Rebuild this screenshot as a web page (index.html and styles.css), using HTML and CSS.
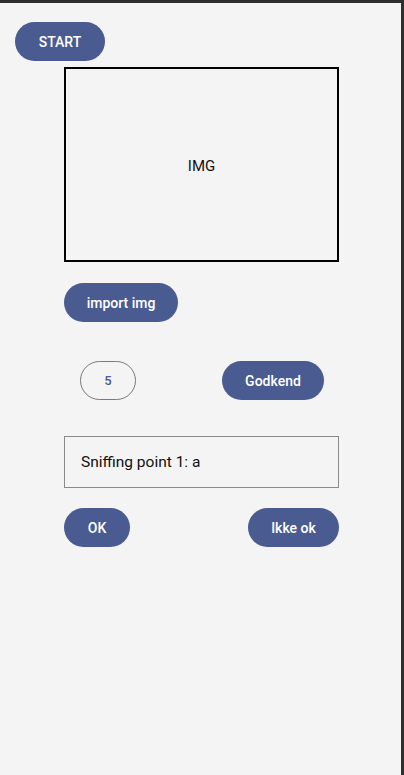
FILE: index.html
```html
<!DOCTYPE html>
<html>
<head>
<meta charset="utf-8">
<link rel="stylesheet" href="styles.css">
</head>
<body>
<div class="screen">
  <div class="top">
    <button class="btn btn-start">START</button>
  </div>
  <div class="main">
    <div class="imgbox">IMG</div>
    <button class="btn btn-import">import img</button>
    <div class="row row-count">
      <div class="pill">5</div>
      <button class="btn btn-godkend">Godkend</button>
    </div>
    <div class="textbox">Sniffing point 1: a</div>
    <div class="row row-ok">
      <button class="btn btn-ok">OK</button>
      <button class="btn btn-ikke">Ikke ok</button>
    </div>
  </div>
</div>
</body>
</html>
```
FILE: styles.css
```css
* { box-sizing: border-box; }
html, body { margin: 0; padding: 0; }
body {
  font-family: Roboto, "Liberation Sans", sans-serif;
  background: #f4f4f4;
}
.screen {
  width: 404px;
  height: 775px;
  background: #f4f4f4;
  border-top: 3px solid #2e2e2e;
  border-right: 3px solid #2e2e2e;
}
.top {
  padding: 19px 0 0 15px;
}
.btn {
  display: flex;
  align-items: center;
  justify-content: center;
  height: 39px;
  border: none;
  border-radius: 20px;
  background: #4a5b91;
  color: #ffffff;
  font-family: "Roboto Medium", Roboto, "Liberation Sans", sans-serif;
  font-weight: 500;
  font-size: 14px;
  padding: 0;
  margin: 0;
}
.btn-start { width: 90px; }
.main {
  margin-left: 64px;
  width: 275px;
  display: flex;
  flex-direction: column;
}
.imgbox {
  margin-top: 6px;
  width: 275px;
  height: 195px;
  border: 2px solid #000;
  display: flex;
  align-items: center;
  justify-content: center;
  font-size: 15px;
  color: #111;
  padding-top: 2px;
}
.btn-import { margin-top: 21px; width: 114px; }
.row { display: flex; align-items: center; }
.row-count { margin-top: 39px; padding-left: 16px; }
.pill {
  width: 56px;
  height: 39px;
  border: 1px solid #7a7a7a;
  border-radius: 20px;
  display: flex;
  align-items: center;
  justify-content: center;
  color: #4a5b91;
  font-family: "Roboto Medium", Roboto, "Liberation Sans", sans-serif;
  font-weight: 500;
  font-size: 13px;
}
.btn-godkend { margin-left: 86px; width: 102px; }
.textbox {
  margin-top: 36px;
  width: 275px;
  height: 52px;
  border: 1px solid #8a8a8a;
  display: flex;
  align-items: center;
  padding-left: 16px;
  font-size: 15.5px;
  color: #111;
}
.row-ok { margin-top: 20px; justify-content: space-between; }
.btn-ok { width: 66px; }
.btn-ikke { width: 91px; }
```
